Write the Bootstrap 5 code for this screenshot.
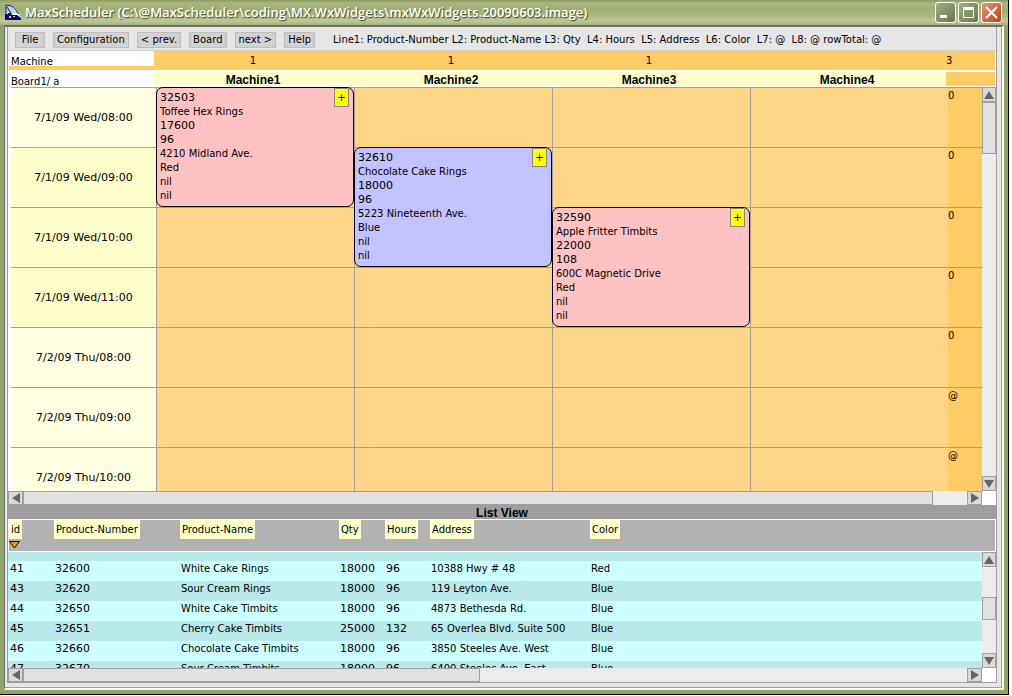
<!DOCTYPE html>
<html lang="en">
<head>
<meta charset="utf-8">
<meta name="viewport" content="width=device-width, initial-scale=1">
<title>MaxScheduler</title>
<link rel="stylesheet" href="https://cdn.jsdelivr.net/npm/bootstrap@5.3.0/dist/css/bootstrap.min.css">
<script src="https://cdn.jsdelivr.net/npm/bootstrap@5.3.0/dist/js/bootstrap.bundle.min.js"></script>
<style>
body{font:10px/14px "DejaVu Sans",sans-serif;color:#000;background:#fff;padding:0 3px 1px 0}
button{padding:0;border:0;border-radius:0;color:#000}
.num{font-size:11px}
.fill{flex:1 1 0;min-height:0;min-width:0}

/* window chrome */
.app-window{border-right:1px solid #000;border-bottom:1px solid #000}
.titlebar{height:25px;background:linear-gradient(#8b9e60 0,#a9b780 3px,#a0b074 9px,#a4b47c 14px,#bdc993 21px,#a3b37c 25px);padding:0 6px 1px 5px}
.titlebar h1{font:600 13px/22px "Open Sans",sans-serif;color:#fff;text-shadow:1px 1px 1px #3f4a22}
.win-btns{gap:2px}
.win-btn{width:21px;height:21px;border:1px solid #fff;border-radius:3px;background:linear-gradient(135deg,#a0b088,#64784a)}
.win-close{background:linear-gradient(135deg,#e8967a,#c63c14)}
.frame{border:solid;border-width:0 4px 4px;border-color:#a0b07a #8fa468 #8fa468 #8fa468}
.frame-in{background:#e6e6e6;border:solid;border-width:2px 2px 2px 1px;border-color:#6f6f68 #fffff0 #fffff0 #6f6f68;box-shadow:inset -1px -1px #a0a0a0;padding:0 5px 5px 2px}
.panel{background:#fff;border:1px solid #a0a0a0;border-top:0}

/* toolbar */
.tools{background:#e6e6e6;height:24px;border-bottom:1px solid #d0d0d0;padding:2px 0 0 7px}
.tool{height:16px;min-width:30px;background:#d2d2d2;border:1px solid #bdbdbd;padding:0 3px;line-height:14px}
.legend{padding-left:10px}

/* board */
.machine-head{display:grid;grid-template-columns:145px repeat(4,1fr) 49px;margin:0 1px;row-gap:2px;text-align:center}
.machine-head>*{background:#fc6;height:19px;line-height:20px}
.machine-head .row-label{background:#fff;text-align:left;padding-left:2px;line-height:22px}
.machine-head .ruled{border-bottom:4px solid #fc6}
.machine-head .plain{height:15px;line-height:20px}
.machine-head .cap{background:#ffc;height:14px;line-height:16px}
.cap,.list-title{font:bold 12px/16px "Liberation Sans",sans-serif}
.machine-head .blank{height:14px}
.board{display:grid;grid-template-columns:145px repeat(4,1fr) 34px;grid-auto-rows:60px;margin-left:3px}
.board>*{border-top:1px solid #a0a0a0}
.slot{background:#ffd587;border-left:1px solid #a0a0a0}
.hour{background:#ffffe1;display:flex;align-items:center;justify-content:center}
.hour-b{background:#ffc}
.total{background:#fc6;padding-top:1px}
.job{border:1px solid #000;border-radius:7px;padding:3px 3px 0;position:relative;z-index:1;white-space:nowrap;overflow:hidden}
.job-red{background:#ffc2c2}
.job-blue{background:#c2c2ff}
.expand{position:absolute;top:0;right:4px;width:15px;height:19px;background:#ff0;border:1px solid #888}

/* scroll bars */
.vbar,.hbar{background:#ececec;display:flex;flex:none}
.vbar{width:14px;flex-direction:column}
.hbar{height:14px}
.arrow{width:15px;height:14px;background:#d9d9d9;border:1px solid #a0a0a0;display:flex;align-items:center;justify-content:center;flex:none}
.vbar .arrow{width:14px;height:15px}
.thumb{background:#e1e1e1;border:1px solid #a0a0a0}
.corner{width:14px;background:#fff}

/* list */
.list-title{background:#9e9e9e;height:14px}
.list-head{background:#b2b2b2;border:1px solid #fff;height:33px}
.list-view{height:116px}
.list-table{width:100%;table-layout:fixed;white-space:nowrap}
.list-table th{font-weight:normal;padding:0;vertical-align:top}
.tag{background:#ffc;display:block;width:max-content;height:19px;line-height:20px;padding:0 2px}
.sort{display:block;margin-top:2px}
.list-table td{height:20px;padding:0 0 4px 2px;line-height:16px}
.list-table tbody tr{background:#b9e9e9}
.list-table tbody tr:nth-child(even){background:#cff}
.list-table .partial td{height:9px;padding:0;line-height:0}
.c-id,.c-hours{width:45px}
.c-pn{width:126px}
.c-name{width:159px}
.c-addr{width:160px}
.c-qty{width:46px}
</style>
</head>
<body class="vh-100 d-flex overflow-hidden">
<svg class="d-none">
<symbol id="up" viewBox="0 0 10 8"><path d="M5 0L10 8H0z" fill="#666"/></symbol>
<symbol id="down" viewBox="0 0 10 8"><path d="M5 8L10 0H0z" fill="#666"/></symbol>
<symbol id="left" viewBox="0 0 8 10"><path d="M0 5L8 0V10z" fill="#666"/></symbol>
<symbol id="right" viewBox="0 0 8 10"><path d="M8 5L0 0V10z" fill="#666"/></symbol>
</svg>
<div class="app-window fill d-flex flex-column">
<header class="titlebar d-flex align-items-center flex-shrink-0">
<svg width="16" height="16" viewBox="0 0 16 16" class="me-1"><path d="M1 1Q11 1 13 9L16 14V16H1z" fill="#fff"/><path d="M1 1Q9 1 12 9H1z" fill="#b4d2f4"/><path d="M1 1V10M1 1Q10 1 13 10M2 3L7 11" stroke="#224" fill="none"/><path d="M0 10H3V9H6V11H12L16 14V16H0z" fill="#05058c"/><path d="M4 12h2v2h-2zM8 12h2v1h-2z" fill="#dd4"/></svg>
<h1 class="m-0 flex-fill text-nowrap overflow-hidden">MaxScheduler (C:\@MaxScheduler\coding\MX.WxWidgets\mxWxWidgets.20090603.image)</h1>
<div class="win-btns d-flex flex-shrink-0">
<button class="win-btn" aria-label="Minimize"><svg width="19" height="19" class="d-block"><path d="M4 12h7v3H4z" fill="#fff"/></svg></button>
<button class="win-btn" aria-label="Maximize"><svg width="19" height="19" class="d-block"><path d="M4 4h11v11H4zM5 7v7h9V7z" fill="#fff" fill-rule="evenodd"/></svg></button>
<button class="win-btn win-close" aria-label="Close"><svg width="19" height="19" class="d-block"><path d="M4 4L15 15M15 4L4 15" stroke="#fff" stroke-width="2"/></svg></button>
</div>
</header>
<div class="frame fill d-flex">
<div class="frame-in fill d-flex">
<main class="panel fill d-flex flex-column">
<nav class="tools d-flex align-items-center gap-2 text-nowrap flex-shrink-0">
<button class="tool">File</button><button class="tool">Configuration</button><button class="tool">&lt; prev.</button><button class="tool">Board</button><button class="tool">next &gt;</button><button class="tool">Help</button>
<span class="legend">Line1: Product-Number L2: Product-Name L3: Qty&nbsp; L4: Hours&nbsp; L5: Address&nbsp; L6: Color&nbsp; L7: @&nbsp; L8: @ rowTotal: @</span>
</nav>
<div class="machine-head flex-shrink-0">
<div class="row-label ruled">Machine</div><div>1</div><div>1</div><div>1</div><div></div><div class="text-start">3</div>
<div class="row-label plain">Board1/ a</div><div class="cap">Machine1</div><div class="cap">Machine2</div><div class="cap">Machine3</div><div class="cap">Machine4</div><div class="blank"></div>
</div>
<section class="fill d-flex flex-column">
<div class="fill d-flex">
<div class="fill overflow-hidden"><div class="board" id="board"></div></div>
<div class="vbar"><button class="arrow" aria-label="Scroll up"><svg width="10" height="8"><use href="#up"/></svg></button><div class="fill d-flex flex-column"><div class="thumb" style="height:14%"></div></div><button class="arrow" aria-label="Scroll down"><svg width="10" height="8"><use href="#down"/></svg></button></div>
</div>
<div class="hbar"><button class="arrow" aria-label="Scroll left"><svg width="8" height="10"><use href="#left"/></svg></button><div class="fill d-flex"><div class="thumb" style="width:96.4%"></div></div><button class="arrow" aria-label="Scroll right"><svg width="8" height="10"><use href="#right"/></svg></button><div class="corner"></div></div>
</section>
<h2 class="list-title m-0 text-center flex-shrink-0">List View</h2>
<div class="list-head flex-shrink-0">
<table class="list-table">
<colgroup><col class="c-id"><col class="c-pn"><col class="c-name"><col class="c-qty"><col class="c-hours"><col class="c-addr"><col></colgroup>
<thead><tr><th><span class="tag">id</span><svg width="11" height="8" class="sort"><path d="M.5 .5H10.500L5.500 7z" fill="#f90" stroke="#000"/></svg></th><th><span class="tag">Product-Number</span></th><th><span class="tag">Product-Name</span></th><th><span class="tag">Qty</span></th><th><span class="tag">Hours</span></th><th><span class="tag">Address</span></th><th><span class="tag">Color</span></th></tr></thead>
</table>
</div>
<div class="list-view d-flex flex-shrink-0">
<div class="fill overflow-hidden">
<table class="list-table">
<colgroup><col class="c-id"><col class="c-pn"><col class="c-name"><col class="c-qty"><col class="c-hours"><col class="c-addr"><col></colgroup>
<tbody id="rows"><tr class="partial"><td colspan="7"></td></tr></tbody>
</table>
</div>
<div class="vbar"><button class="arrow" aria-label="Scroll list up"><svg width="10" height="8"><use href="#up"/></svg></button><div class="fill"><div style="height:35%"></div><div class="thumb" style="height:27%"></div></div><button class="arrow" aria-label="Scroll list down"><svg width="10" height="8"><use href="#down"/></svg></button></div>
</div>
<div class="hbar"><button class="arrow" aria-label="Scroll list left"><svg width="8" height="10"><use href="#left"/></svg></button><div class="fill d-flex"><div class="thumb" style="width:48.4%"></div></div><button class="arrow" aria-label="Scroll list right"><svg width="8" height="10"><use href="#right"/></svg></button><div class="corner"></div></div>
</main>
</div>
</div>
</div>
<script>
const hours=[['7/1/09 Wed/08:00','0'],['7/1/09 Wed/09:00','0'],['7/1/09 Wed/10:00','0'],['7/1/09 Wed/11:00','0'],['7/2/09 Thu/08:00','0'],['7/2/09 Thu/09:00','@'],['7/2/09 Thu/10:00','@']];
const jobs=[
 {col:2,row:1,tone:'red',lines:['32503','Toffee Hex Rings','17600','96','4210 Midland Ave.','Red','nil','nil']},
 {col:3,row:2,tone:'blue',lines:['32610','Chocolate Cake Rings','18000','96','5223 Nineteenth Ave.','Blue','nil','nil']},
 {col:4,row:3,tone:'red',lines:['32590','Apple Fritter Timbits','22000','108','600C Magnetic Drive','Red','nil','nil']}];
let html='';
hours.forEach(([label,total],i)=>{
  const row=`grid-row:${i+1};`;
  html+=`<div class="hour num ${i>0&&i<4?'hour-b':''}" style="${row}grid-column:1">${label}</div>`;
  for(let c=2;c<6;c++) html+=`<div class="slot" style="${row}grid-column:${c}"></div>`;
  html+=`<div class="total" style="${row}grid-column:6">${total}</div>`;
});
jobs.forEach(j=>{
  html+=`<article class="job job-${j.tone}" style="grid-column:${j.col};grid-row:${j.row}/span 2">`+
    j.lines.map(t=>`<div class="${/^\d+$/.test(t)?'num':''}">${t}</div>`).join('')+
    '<button class="expand" aria-label="Expand">+</button></article>';
});
document.getElementById('board').innerHTML=html;
const rows=[
 ['41','32600','White Cake Rings','18000','96','10388 Hwy # 48','Red'],
 ['43','32620','Sour Cream Rings','18000','96','119 Leyton Ave.','Blue'],
 ['44','32650','White Cake Timbits','18000','96','4873 Bethesda Rd.','Blue'],
 ['45','32651','Cherry Cake Timbits','25000','132','65 Overlea Blvd. Suite 500','Blue'],
 ['46','32660','Chocolate Cake Timbits','18000','96','3850 Steeles Ave. West','Blue'],
 ['47','32670','Sour Cream Timbits','18000','96','6400 Steeles Ave. East','Blue']];
document.getElementById('rows').insertAdjacentHTML('beforeend',rows.map(r=>'<tr>'+r.map(t=>`<td class="${/^\d+$/.test(t)?'num':''}">${t}</td>`).join('')+'</tr>').join(''));
</script>
</body>
</html>
